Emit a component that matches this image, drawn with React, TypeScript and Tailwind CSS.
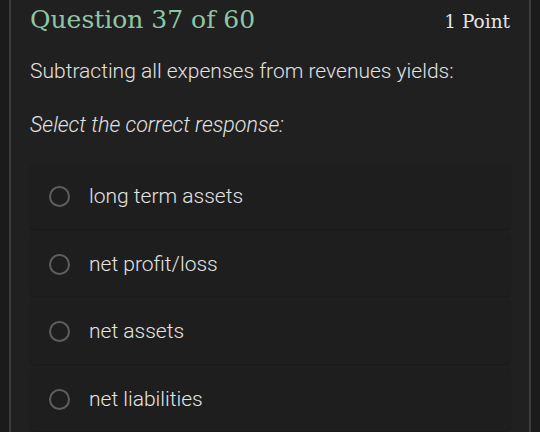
const options = ["long term assets", "net profit/loss", "net assets", "net liabilities"];

export default function App() {
  return (
    <div className="h-[432px] w-[540px] overflow-hidden bg-[#1b1b1b] px-[9px]">
      <div className="h-full border-x-2 border-[#3d3d3d] bg-[#202020] px-[19px]" style={{ fontFamily: "Roboto, 'Liberation Sans', sans-serif" }}>
        <div className="flex items-baseline justify-between pt-[2px]">
          <h1 className="text-[25px] leading-[36px] text-[#8fc7a6]" style={{ fontFamily: "'DejaVu Serif', 'Liberation Serif', serif" }}>
            Question 37 of 60
          </h1>
          <span className="text-[18.5px] text-[#e6e6e6]" style={{ fontFamily: "'DejaVu Serif', 'Liberation Serif', serif" }}>
            1 Point
          </span>
        </div>
        <p className="mt-[19px] text-[21px] font-light leading-[28px] text-[#e2e2e2]">
          Subtracting all expenses from revenues yields:
        </p>
        <p className="mt-[26px] text-[21.5px] font-light italic leading-[28px] text-[#e2e2e2]">
          Select the correct response:
        </p>
        <div className="mt-[26px] flex flex-col gap-[4px]">
          {options.map((o) => (
            <div key={o} className="flex h-[63.5px] items-center gap-[19px] rounded-sm bg-[#1e1e1e] pl-[19px] shadow-[0_1px_2px_rgba(0,0,0,0.25)]">
              <span className="h-[21px] w-[21px] rounded-full border-2 border-[#5e5e5e]" />
              <span className="text-[21px] font-light text-[#e4e4e4]">{o}</span>
            </div>
          ))}
        </div>
      </div>
    </div>
  );
}
